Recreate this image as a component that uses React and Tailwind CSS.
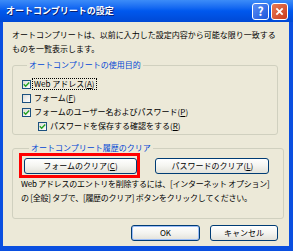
import React from 'react';

const font = { fontFamily: '"Noto Sans CJK JP", "Noto Sans", sans-serif' };

const Check = () => (
    <svg viewBox="0 0 9 9" className="w-[7px] h-[7px]">
        <path d="M1 4.2 L3.4 6.6 L8 1.8" fill="none" stroke="#21A121" strokeWidth="1.8" />
    </svg>
);

const CheckBox = ({ checked, children, indent, focus }) => (
    <div className={`flex items-center h-[14px] gap-[2px] ${indent ? 'pl-[16px]' : ''}`}>
        <span className="w-[9px] h-[9px] border border-[#1C5180] bg-gradient-to-br from-[#DCDCD7] to-white flex items-center justify-center">
            {checked && <Check />}
        </span>
        <span className={`leading-[10px] px-[1px] ${focus ? 'outline outline-1 outline-dotted outline-black' : ''}`}>
            {children}
        </span>
    </div>
);

const Btn = ({ children, w, def }) => (
    <button
        className={`h-[16px] ${w} border border-[#003C74] rounded-[3px] bg-gradient-to-b from-white via-[#F4F4F0] to-[#E3E2DA] text-[8px] leading-[14px] text-black ${def ? 'shadow-[inset_0_0_0_1px_#9CBDF7]' : ''}`}
    >
        {children}
    </button>
);

export default function App() {
    return (
        <div className="w-[293px] h-[251px] bg-[#0A4FE0] flex flex-col text-[8px] text-black" style={font}>
            {/* title bar */}
            <div className="h-[22px] flex items-center justify-between pl-[6px] pr-[5px] bg-gradient-to-b from-[#3C8CF8] via-[#0058EE] to-[#0049D5]">
                <span className="text-white font-bold text-[9px] leading-[10px] [text-shadow:1px_1px_0_#0A1E6E]">オートコンプリートの設定</span>
                <div className="flex gap-[2px]">
                    <span className="w-[17px] h-[17px] rounded-[3px] border border-white bg-gradient-to-br from-[#5A8EF5] to-[#1C55DA] flex items-center justify-center text-white font-bold text-[12px] leading-none">?</span>
                    <span className="w-[17px] h-[17px] rounded-[3px] border border-white bg-gradient-to-br from-[#E97A55] to-[#C8391A] flex items-center justify-center">
                        <svg viewBox="0 0 10 10" className="w-[9px] h-[9px]">
                            <path d="M1.5 1.5 L8.5 8.5 M8.5 1.5 L1.5 8.5" stroke="white" strokeWidth="2" />
                        </svg>
                    </span>
                </div>
            </div>

            {/* body */}
            <div className="flex-1 bg-[#ECE9D8] ml-[3px] mr-[4px] mb-[5px] pt-[6px] pl-[9px] pr-[11px] flex flex-col">
                <p className="leading-[14px] whitespace-nowrap">
                    オートコンプリートは、以前に入力した設定内容から可能な限り一致する<br />
                    ものを一覧表示します。
                </p>

                <fieldset className="mt-[4px] border border-[#D0D0BF] rounded-[3px] pl-[9px] pb-[1px]">
                    <legend className="ml-[5px] px-[2px] text-[#0046D5] leading-[10px]">オートコンプリートの使用目的</legend>
                    <div className="pt-[7px]">
                        <CheckBox checked focus>Web アドレス(<u>A</u>)</CheckBox>
                        <CheckBox>フォーム(<u>F</u>)</CheckBox>
                        <CheckBox checked>フォームのユーザー名およびパスワード(<u>P</u>)</CheckBox>
                        <CheckBox checked indent>パスワードを保存する確認をする(<u>R</u>)</CheckBox>
                    </div>
                </fieldset>

                <fieldset className="mt-[8px] border border-[#D0D0BF] rounded-[3px] pl-[11px] pr-[14px] pb-[13px]">
                    <legend className="ml-[5px] px-[2px] text-[#0046D5] leading-[10px]">オートコンプリート履歴のクリア</legend>
                    <div className="pt-[5px] flex justify-between">
                        <span className="relative flex">
                            <Btn w="w-[113px]">フォームのクリア(<u>C</u>)</Btn>
                            <span className="absolute -left-[5px] -right-[3px] -top-[5px] -bottom-[4px] border-[3px] border-[#FF0000]" />
                        </span>
                        <Btn w="w-[114px]">パスワードのクリア(<u>L</u>)</Btn>
                    </div>
                    <p className="mt-[3px] -ml-[3px] leading-[14px] whitespace-nowrap tracking-[-0.25px]">
                        Web アドレスのエントリを削除するには、[インターネット オプション]<br />
                        の [全般] タブで、[履歴のクリア] ボタンをクリックしてください。
                    </p>
                </fieldset>

                <div className="mt-[6px] flex justify-end gap-[10px]">
                    <Btn w="w-[69px]" def>OK</Btn>
                    <Btn w="w-[68px]">キャンセル</Btn>
                </div>
            </div>
        </div>
    );
}
